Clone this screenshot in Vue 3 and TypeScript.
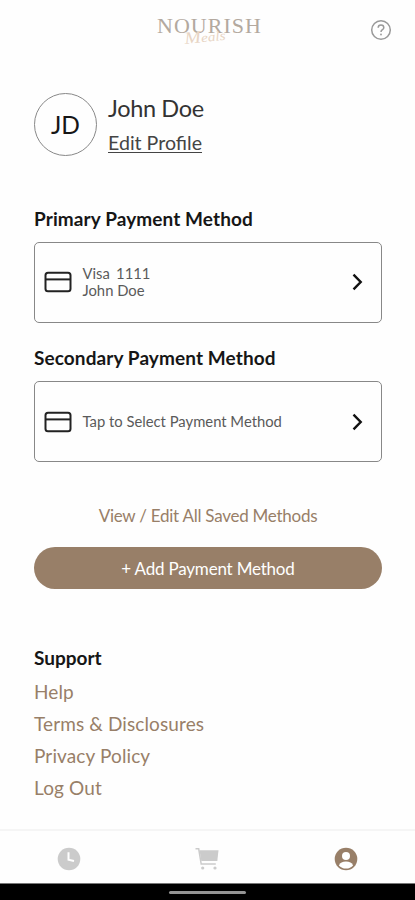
<script setup lang="ts">
interface PaymentCard {
  key: string
  title: string
  lines: string[]
}

const cards: PaymentCard[] = [
  { key: 'primary', title: 'Primary Payment Method', lines: ['Visa 1111', 'John Doe'] },
  { key: 'secondary', title: 'Secondary Payment Method', lines: ['Tap to Select Payment Method'] },
]

const supportLinks: string[] = ['Help', 'Terms & Disclosures', 'Privacy Policy', 'Log Out']
</script>

<template>
  <div class="screen">
    <header class="top">
      <svg class="logo" viewBox="0 0 110 40" role="img" aria-label="Nourish Meals">
        <text class="logo-name" x="4" y="20.5" textLength="104" lengthAdjust="spacing">NOURISH</text>
        <text class="logo-script" x="32" y="32" textLength="41" lengthAdjust="spacingAndGlyphs" transform="rotate(-6 32 32)"><tspan class="initial">M</tspan>eals</text>
      </svg>
      <svg class="help" viewBox="0 0 22 22" aria-label="Help">
        <circle cx="11" cy="11" r="9.3" />
        <path d="M8.2 8.8c0-1.6 1.2-2.7 2.8-2.7s2.8 1.1 2.8 2.6c0 2-2.8 2-2.8 4.2" />
        <circle class="dot" cx="11" cy="15.5" r="0.9" />
      </svg>
    </header>

    <main class="content">
      <section class="profile">
        <div class="avatar">JD</div>
        <div class="identity">
          <div class="name">John Doe</div>
          <a class="edit">Edit Profile</a>
        </div>
      </section>

      <section v-for="card in cards" :key="card.key" class="method">
        <h2>{{ card.title }}</h2>
        <div class="card">
          <svg class="card-icon" viewBox="0 0 28 22">
            <rect x="1.5" y="1.7" width="25" height="18.6" rx="2.5" />
            <path d="M1.5 8.4h25" />
          </svg>
          <div class="lines">
            <div v-for="line in card.lines" :key="line" :class="card.key">{{ line }}</div>
          </div>
          <svg class="chevron" viewBox="0 0 12 18"><path d="M2.5 1.7 9.7 9 2.5 16.3" /></svg>
        </div>
      </section>

      <a class="view-all">View / Edit All Saved Methods</a>
      <button class="add" type="button">+ Add Payment Method</button>

      <section class="support">
        <h2>Support</h2>
        <a v-for="link in supportLinks" :key="link">{{ link }}</a>
      </section>
    </main>

    <nav class="tabs">
      <svg viewBox="0 0 24 24">
        <circle cx="12" cy="12" r="11.3" fill="#cbcbcb" />
        <path d="M11.5 5.2v7.6l5.5 1.2" fill="none" stroke="#fff" stroke-width="2" />
      </svg>
      <svg viewBox="0 0 24 24">
        <path d="M.5 1.8h3.2L6.2 17h14.6" fill="none" stroke="#cbcbcb" stroke-width="1.5" />
        <path d="M4.5 3.2h19L22.3 14H6.3z" fill="#cbcbcb" />
        <circle cx="7.7" cy="21" r="1.6" fill="#cbcbcb" />
        <circle cx="20" cy="21" r="1.6" fill="#cbcbcb" />
      </svg>
      <svg viewBox="0 0 24 24">
        <circle cx="12" cy="12" r="11.3" fill="#987f68" />
        <circle cx="12" cy="9" r="4" fill="#fff" />
        <path d="M4.9 18.4c1.2-2.6 3.5-3.8 7.1-3.8s5.9 1.2 7.1 3.8c-1.7 2-4.3 3.2-7.1 3.2s-5.4-1.2-7.1-3.2z" fill="#fff" />
      </svg>
    </nav>
    <div class="system"><div class="pill"></div></div>
  </div>
</template>

<style>
body {
  background: #fff;
}
</style>

<style scoped>
.screen {
  display: flex;
  flex-direction: column;
  width: 415px;
  height: 900px;
  overflow: hidden;
  background: #fefefe;
  color: #161616;
  font-family: Lato, sans-serif;
}
.top {
  display: grid;
  grid-template-columns: 1fr 110px 1fr;
  height: 60px;
  padding: 12px 23px 0;
  box-sizing: border-box;
}
.logo {
  grid-column: 2;
  width: 110px;
  height: 40px;
}
.logo-name {
  font: 22px 'Liberation Serif', serif;
  fill: #b3a99f;
}
.logo-script {
  font: italic 13px 'Liberation Serif', serif;
  fill: #e8d5c4;
}
.initial {
  font-size: 17px;
}
.help {
  justify-self: end;
  width: 22px;
  height: 22px;
  margin-top: 7px;
  fill: none;
  stroke: #999;
  stroke-width: 1.5;
}
.help .dot {
  fill: #999;
  stroke: none;
}
.content {
  display: flex;
  flex: 1;
  flex-direction: column;
  padding: 33px 33px 0 34px;
}
.profile {
  display: flex;
  gap: 11px;
  height: 113.5px;
}
.avatar {
  display: flex;
  align-items: center;
  justify-content: center;
  width: 63px;
  height: 63px;
  box-sizing: border-box;
  border: 1px solid #888;
  border-radius: 50%;
  font-size: 24.5px;
}
.name {
  font-size: 23.5px;
  line-height: 31px;
  letter-spacing: -0.35px;
  color: #333;
}
.edit {
  display: block;
  margin-top: 6px;
  font-size: 19.6px;
  line-height: 26px;
  color: #444;
  text-decoration: underline;
  text-decoration-thickness: 1px;
  text-underline-offset: 2px;
}
h2 {
  margin: 0;
  font-size: 19px;
  font-weight: 700;
  line-height: 24px;
  letter-spacing: 0.1px;
}
.method {
  height: 139.5px;
}
.card {
  display: flex;
  align-items: center;
  height: 81px;
  margin-top: 11px;
  padding: 0 18px 0 9px;
  box-sizing: border-box;
  border: 1px solid #888;
  border-radius: 5px;
}
.card-icon {
  width: 28px;
  height: 22px;
  fill: none;
  stroke: #222;
  stroke-width: 2;
}
.lines {
  flex: 1;
  margin-left: 10.5px;
  font-size: 14.8px;
  line-height: 17px;
  color: #5a5a5a;
}
.lines .primary:first-child {
  word-spacing: 2.5px;
}
.chevron {
  width: 12px;
  height: 18px;
  fill: none;
  stroke: #111;
  stroke-width: 2.4;
}
.view-all {
  margin-top: 18px;
  font-size: 17px;
  line-height: 24px;
  letter-spacing: -0.25px;
  text-align: center;
  color: #987f68;
}
.add {
  height: 42px;
  margin-top: 19.5px;
  border: 0;
  border-radius: 21px;
  background: #987f68;
  color: #fff;
  font: 17px Lato, sans-serif;
  letter-spacing: -0.2px;
}
.support {
  display: flex;
  flex-direction: column;
  margin-top: 56.5px;
}
.support h2 {
  margin-bottom: 6px;
  letter-spacing: 0;
}
.support a {
  font-size: 19px;
  line-height: 32.2px;
  letter-spacing: 0.12px;
  color: #987f68;
}
.tabs {
  display: grid;
  grid-template-columns: repeat(3, 1fr);
  align-items: center;
  justify-items: center;
  height: 54px;
  padding-top: 4px;
  box-sizing: border-box;
  border-top: 2px solid #f5f5f5;
}
.tabs svg {
  width: 24px;
  height: 24px;
}
.system {
  display: flex;
  justify-content: center;
  height: 17px;
  padding-top: 7px;
  box-sizing: border-box;
  border-top: 1px solid #777;
  background: #000;
}
.pill {
  width: 77px;
  height: 3px;
  border-radius: 2px;
  background: #949494;
}
</style>
